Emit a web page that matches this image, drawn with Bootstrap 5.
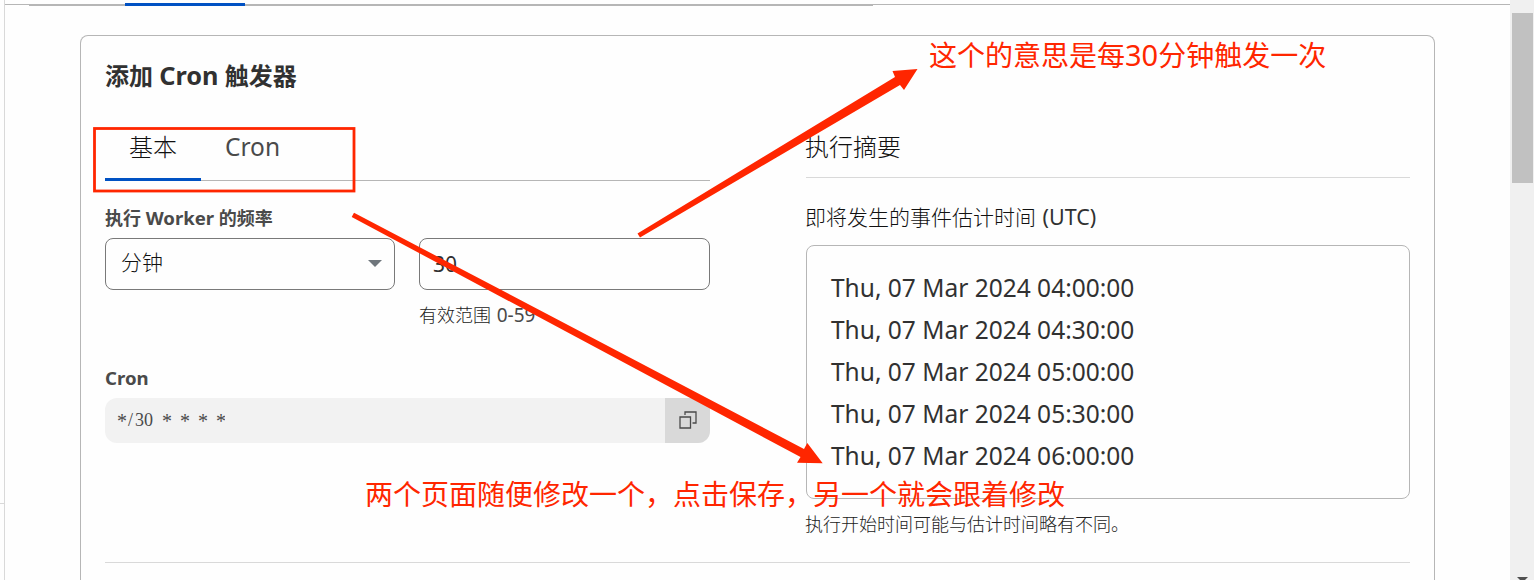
<!DOCTYPE html>
<html lang="zh-CN">
<head>
<meta charset="utf-8">
<title>Cron 触发器</title>
<link href="https://cdn.jsdelivr.net/npm/bootstrap@5.3.0/dist/css/bootstrap.min.css" rel="stylesheet">
<style>
body{height:580px;overflow:hidden;background:#fefefe;color:#313131;font-family:"Noto Sans","Noto Sans CJK SC",sans-serif}
.gutter{width:5px;border-right:1px solid #d9d9d9}
.gutter i{display:block;margin-top:503px;height:1px;background:#d9d9d9}
.strip{height:35px;border-top:1px solid #b6b6b6;margin-top:4px;margin-bottom:-4px}
.strip .track{width:844px;height:2px;margin:-1px 0 0 24px;background:#b6b6b6}
.strip .current{width:120px;height:3px;margin-left:96px;background:#0051c3;transform:translateY(-1px)}
.panel{width:1355px;height:545px;margin-left:75px;border:1px solid #b6b6b6;border-bottom:0;border-radius:8px 8px 0 0;padding:23px 24px 0}
.heading{height:32px;font-size:24px;line-height:32px;font-weight:700}
.heading span{font-size:25.3px}
.fs24{font-size:24px;line-height:32px}
.light{font-family:"Noto Sans","Noto Sans CJK SC Light","Noto Sans CJK SC",sans-serif;font-weight:350;color:#111}
.cols{height:431px;margin-top:40px;display:grid;grid-template-columns:605px 604px;column-gap:96px}
.tabs{height:50px;border-bottom:1px solid #b6b6b6}
.tabs div{height:50px;padding:0 24px;color:#4a4a4a}
.tabs .on{border-bottom:3px solid #0051c3;color:#111}
.tabs .off{font-size:24.5px}
.lab{height:24px;font-size:18px;line-height:24px;font-weight:700;color:#4a4a4a}
.lab span{font-size:18.6px}
.first-lab{margin-top:25px}
.cron-lab{margin-top:39px}
.field{height:52px;border:1px solid #797979;border-radius:8px;font-size:21px}
.pick{padding:0 12px 2px 15px}
.amount{padding:2px 0 0 13px}
.pair{display:grid;grid-template-columns:290px 291px;column-gap:24px;margin-top:8px}
.hint{height:24px;font-size:18px;line-height:24px;color:#222;margin-top:13px}
.range{padding-left:314px}
.range span{font-size:19px;line-height:1;color:#4a4a4a;margin-left:1px}
.code{height:45px;border-radius:12px;background:#f2f2f2;overflow:hidden;margin-top:8px}
.code pre{font:18px/43px "Liberation Serif",serif;color:#4a4a4a;margin:0 0 0 12px}
.code pre span{display:inline-block;width:9px;text-align:center}
.code pre .st{font-size:20px;transform:translateY(2px)}
.copy{width:45px;background:#d9d9d9;padding:0 0 1px 1px}
.shift{margin-left:-1px}
.sumhead{height:47px;border-bottom:1px solid #d9d9d9}
.sub{height:28px;font-size:21px;line-height:28px;margin-top:25px}
.sub span{font-size:21.5px;line-height:1;color:#313131;margin-left:1px}
.times{height:254px;border:1px solid #b6b6b6;border-radius:8px;margin-top:14px;padding:21px 24px;font-size:24.5px;line-height:42px}
.rule{border-top:1px solid #d9d9d9;height:1px}
.scroller{width:24px;background:#f0f0f0;padding:13px 1px 0 2px}
.thumb{height:170px;background:#c1c1c1}
.note{position:absolute;color:#ff2600;font-size:28px;line-height:36px;white-space:nowrap}
.n1{left:929px;top:37px}.n1 span{font-size:29px;line-height:1}.n2{left:365px;top:476px}
</style>
</head>
<body class="d-flex position-relative">
<div class="gutter"><i></i></div>
<main class="flex-grow-1">
  <div class="strip"><div class="track"><div class="current"></div></div></div>
  <section class="panel">
    <div class="heading">添加 <span>Cron</span> 触发器</div>
    <div class="cols">
      <div>
        <div class="tabs d-flex fs24"><div class="on light">基本</div><div class="off">Cron</div></div>
        <div class="lab first-lab">执行 <span>Worker</span> 的频率</div>
        <div class="pair">
          <div class="field pick d-flex align-items-center justify-content-between light"><span>分钟</span>
            <svg width="14" height="7"><path d="M0 0h14L7 7z" fill="#6f767c"/></svg></div>
          <div class="field amount d-flex align-items-center">30</div>
        </div>
        <div class="hint light range">有效范围 <span class="fw-normal">0-59</span></div>
        <div class="lab cron-lab"><span>Cron</span></div>
        <div class="code d-flex justify-content-between">
          <pre><span class="st">*</span><span>/</span><span>3</span><span>0</span><span> </span><span class="st">*</span><span> </span><span class="st">*</span><span> </span><span class="st">*</span><span> </span><span class="st">*</span></pre>
          <div class="copy d-flex align-items-center justify-content-center"><svg width="18" height="18" fill="none" stroke="#4a4a4a" stroke-width="1.3"><path d="M1 6h10.5v11H1zM6 4V1h11v11h-3.5"/></svg></div>
        </div>
      </div>
      <div>
        <div class="sumhead fs24 light"><div class="shift">执行摘要</div></div>
        <div class="sub light shift">即将发生的事件估计时间 <span class="fw-normal">(UTC)</span></div>
        <div class="times"><div>Thu, 07 Mar 2024 04:00:00</div><div>Thu, 07 Mar 2024 04:30:00</div><div>Thu, 07 Mar 2024 05:00:00</div><div>Thu, 07 Mar 2024 05:30:00</div><div>Thu, 07 Mar 2024 06:00:00</div></div>
        <div class="hint light shift">执行开始时间可能与估计时间略有不同。</div>
      </div>
    </div>
    <div class="rule"></div>
  </section>
</main>
<aside class="scroller d-flex flex-column justify-content-between"><div class="thumb"></div><svg class="ms-1" width="13" height="3"><path d="M1 0h11L9 3H4z" fill="#505050"/></svg></aside>
<svg class="position-absolute top-0 start-0" width="1534" height="580" fill="#ff2600">
  <rect x="94.5" y="128.5" width="259.5" height="62.5" fill="none" stroke="#ff2600" stroke-width="2.8"/>
  <path d="M637.5 233.5L895 77 892.5 71 917.5 69 904 90 900 85 640 237.5z"/>
  <path d="M354 212.7L804 449 807.3 443 822.7 463.3 797 462.7 800.5 457 351.7 217z"/>
</svg>
<div class="note n1">这个的意思是每<span>30</span>分钟触发一次</div>
<div class="note n2">两个页面随便修改一个，点击保存，另一个就会跟着修改</div>
<script src="https://cdn.jsdelivr.net/npm/bootstrap@5.3.0/dist/js/bootstrap.bundle.min.js"></script>
</body>
</html>
